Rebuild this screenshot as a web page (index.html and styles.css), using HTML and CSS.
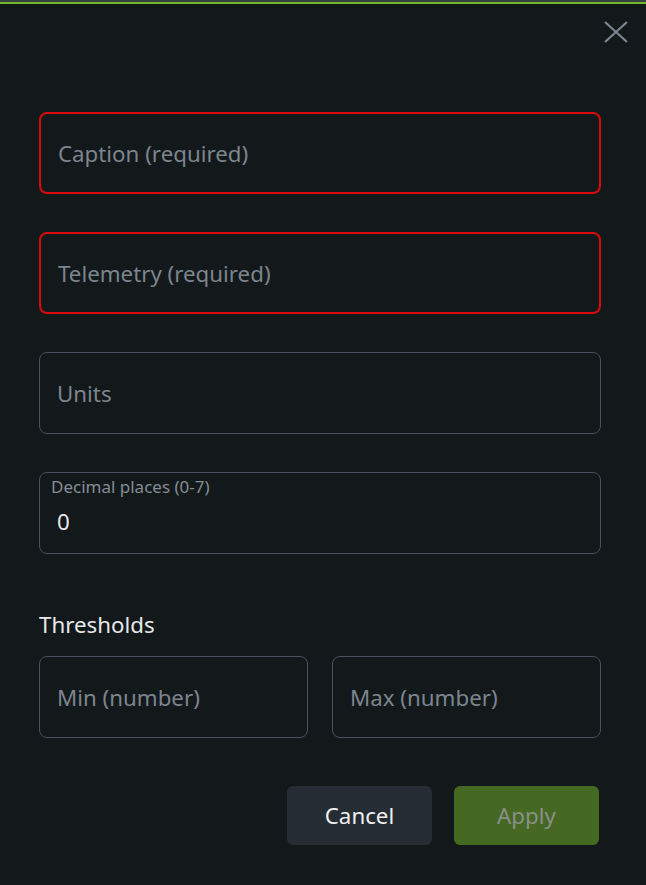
FILE: index.html
```html
<!DOCTYPE html>
<html lang="en">
<head>
<meta charset="utf-8">
<title>Edit widget</title>
<link rel="stylesheet" href="styles.css">
</head>
<body>
<div class="topstrip"></div>
<div class="topline"></div>
<div class="dialog">
  <div class="header">
    <button class="close" aria-label="Close">
      <svg width="26" height="24" viewBox="0 0 26 24"><path d="M2 2 L24 22 M24 2 L2 22" stroke="#7c8690" stroke-width="2.2" fill="none"/></svg>
    </button>
  </div>
  <form class="form">
    <div class="field error"><input type="text" placeholder="Caption (required)"></div>
    <div class="field error"><input type="text" placeholder="Telemetry (required)"></div>
    <div class="field"><input type="text" placeholder="Units"></div>
    <div class="field labelled">
      <label class="floating">Decimal places (0-7)</label>
      <input type="text" value="0">
    </div>
    <div class="thresholds">
      <div class="section-title">Thresholds</div>
      <div class="pair">
        <div class="field"><input type="text" placeholder="Min (number)"></div>
        <div class="field"><input type="text" placeholder="Max (number)"></div>
      </div>
    </div>
    <div class="actions">
      <button type="button" class="btn cancel">Cancel</button>
      <button type="button" class="btn apply">Apply</button>
    </div>
  </form>
</div>
</body>
</html>
```
FILE: styles.css
```css
* { box-sizing: border-box; }
html, body {
  margin: 0;
  padding: 0;
  background: #13181b;
  font-family: "Noto Sans", "Open Sans", sans-serif;
  height: 100%;
  overflow: hidden;
}
.topstrip {
  height: 2px;
  background: #3a3f42;
}
.topline {
  height: 2px;
  background: #6fb82a;
}
.dialog {
  padding: 0 45px 0 39px;
}
.header {
  display: flex;
  justify-content: flex-end;
  height: 108px;
  padding-top: 16px;
  margin-right: -28px;
}
.close {
  background: none;
  border: 0;
  padding: 0;
  width: 26px;
  height: 24px;
  cursor: pointer;
}
.form {
  display: flex;
  flex-direction: column;
  gap: 38px;
}
.field {
  position: relative;
  height: 82px;
  border: 1.5px solid #49525a;
  border-radius: 8px;
  display: flex;
  align-items: center;
}
.field.error {
  border: 2px solid #d90a0a;
}
.field input {
  width: 100%;
  height: 100%;
  background: transparent;
  border: 0;
  outline: none;
  padding: 0 17px;
  font-family: inherit;
  font-size: 22.3px;
  color: #e8eaeb;
}
.field input::placeholder {
  color: #7b858e;
  opacity: 1;
}
.field.labelled input {
  padding-top: 16px;
}
.floating {
  position: absolute;
  left: 11px;
  top: 2px;
  font-size: 17px;
  color: #848d95;
}
.thresholds {
  margin-top: 19px;
  display: flex;
  flex-direction: column;
  gap: 17px;
}
.section-title {
  font-size: 22.3px;
  color: #e6e8e9;
  line-height: 28px;
}
.pair {
  display: flex;
  gap: 24px;
}
.pair .field {
  flex: 1;
}
.actions {
  display: flex;
  justify-content: flex-end;
  gap: 22px;
  margin-top: 10px;
  padding-right: 2px;
}
.btn {
  width: 145px;
  height: 59px;
  border: 0;
  border-radius: 6px;
  font-family: inherit;
  font-size: 22.3px;
}
.cancel {
  background: #262c33;
  color: #eef0f1;
}
.apply {
  background: #456822;
  color: #8c8f8a;
}
```
